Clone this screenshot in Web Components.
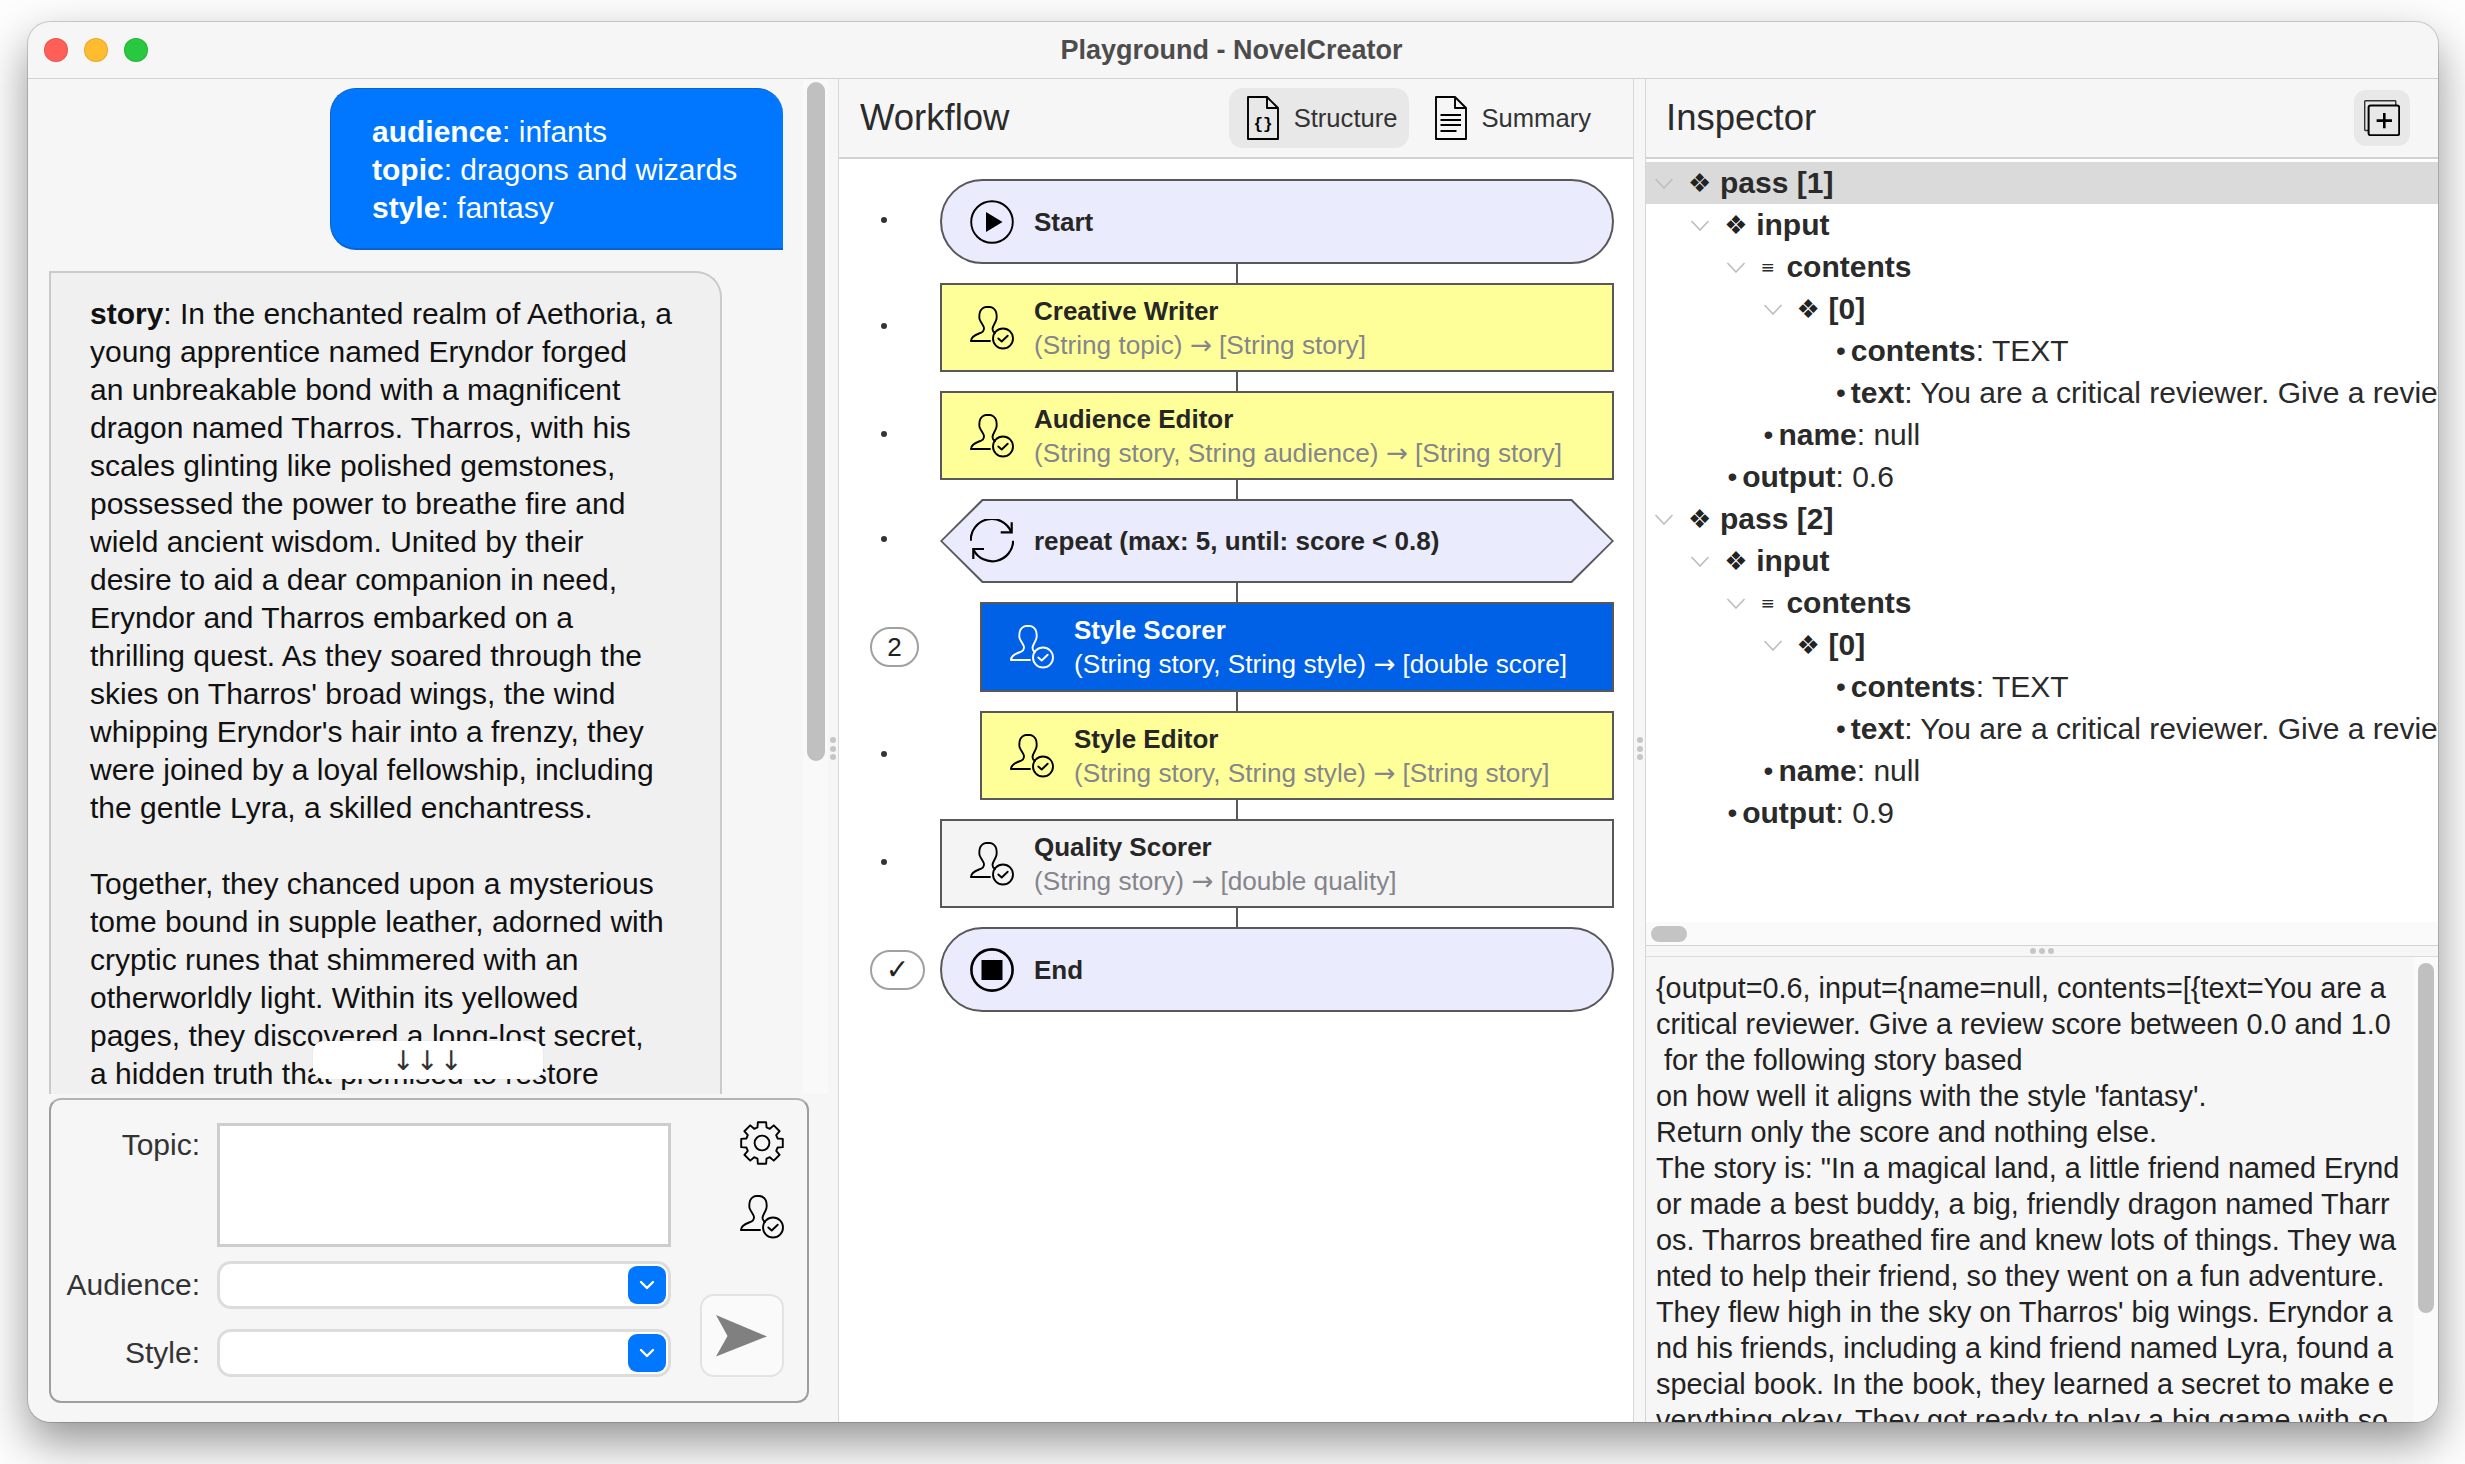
<!DOCTYPE html>
<html>
<head>
<meta charset="utf-8">
<title>Playground - NovelCreator</title>
<style>
    html, body { margin: 0; height: 100%; background: #fdfdfd; }
</style>
</head>
<body>
<novel-app>
    <chat-panel slot="left">
        <chat-bubble kind="user"><b>audience</b>: infants<br><b>topic</b>: dragons and wizards<br><b>style</b>: fantasy</chat-bubble>
        <chat-bubble kind="reply"><b>story</b>: In the enchanted realm of Aethoria, a<br>young apprentice named Eryndor forged<br>an unbreakable bond with a magnificent<br>dragon named Tharros. Tharros, with his<br>scales glinting like polished gemstones,<br>possessed the power to breathe fire and<br>wield ancient wisdom. United by their<br>desire to aid a dear companion in need,<br>Eryndor and Tharros embarked on a<br>thrilling quest. As they soared through the<br>skies on Tharros' broad wings, the wind<br>whipping Eryndor's hair into a frenzy, they<br>were joined by a loyal fellowship, including<br>the gentle Lyra, a skilled enchantress.<br><br>Together, they chanced upon a mysterious<br>tome bound in supple leather, adorned with<br>cryptic runes that shimmered with an<br>otherworldly light. Within its yellowed<br>pages, they discovered a long-lost secret,<br>a hidden truth that promised to restore<br>balance to the realm.</chat-bubble>
    </chat-panel>
    <input-form slot="left"></input-form>

    <flow-panel slot="center">
        <flow-node kind="start" icon="play" name="Start"></flow-node>
        <flow-node kind="agent" icon="agent" name="Creative Writer" sub="(String topic) → [String story]"></flow-node>
        <flow-node kind="agent" icon="agent" name="Audience Editor" sub="(String story, String audience) → [String story]"></flow-node>
        <flow-node kind="loop" icon="repeat" name="repeat (max: 5, until: score &lt; 0.8)"></flow-node>
        <flow-node kind="active" icon="agent" indent name="Style Scorer" sub="(String story, String style) → [double score]" badge="2"></flow-node>
        <flow-node kind="agent" icon="agent" indent name="Style Editor" sub="(String story, String style) → [String story]"></flow-node>
        <flow-node kind="plain" icon="agent" name="Quality Scorer" sub="(String story) → [double quality]"></flow-node>
        <flow-node kind="end" icon="stop" name="End" badge="✓"></flow-node>
    </flow-panel>

    <inspector-panel slot="right">
        <tree-row level="0" mark="❖" open selected><b>pass [1]</b></tree-row>
        <tree-row level="1" mark="❖" open><b>input</b></tree-row>
        <tree-row level="2" mark="≡" open><b>contents</b></tree-row>
        <tree-row level="3" mark="❖" open><b>[0]</b></tree-row>
        <tree-row level="4" mark="•"><b>contents</b>: TEXT</tree-row>
        <tree-row level="4" mark="•"><b>text</b>: You are a critical reviewer. Give a review score between 0.0 and 1.0 for the following story</tree-row>
        <tree-row level="2" mark="•"><b>name</b>: null</tree-row>
        <tree-row level="1" mark="•"><b>output</b>: 0.6</tree-row>
        <tree-row level="0" mark="❖" open><b>pass [2]</b></tree-row>
        <tree-row level="1" mark="❖" open><b>input</b></tree-row>
        <tree-row level="2" mark="≡" open><b>contents</b></tree-row>
        <tree-row level="3" mark="❖" open><b>[0]</b></tree-row>
        <tree-row level="4" mark="•"><b>contents</b>: TEXT</tree-row>
        <tree-row level="4" mark="•"><b>text</b>: You are a critical reviewer. Give a review score between 0.0 and 1.0 for the following story</tree-row>
        <tree-row level="2" mark="•"><b>name</b>: null</tree-row>
        <tree-row level="1" mark="•"><b>output</b>: 0.9</tree-row>
    </inspector-panel>
</novel-app>

<script>
const PERSON = `
    <path d="M.8 35H20M1 35C1 31 5 29 9 27.5 13 26 14 25 14 22 14 20 11 17 9.5 13 9 9 9 1 18 .8 27 1 27 9 26.5 13 25.5 17 22.5 20 22.5 23 22.5 25 23.5 26 25 26.8"/>
    <circle cx="33" cy="32.5" r="10"/>
    <path d="M28.3 32.5l3.4 3 6-5.8"/>`;

const ICONS = {
    agent: PERSON,
    play: `<circle cx="22" cy="22" r="20.8"/><path d="M16 12L32.5 22 16 32Z" fill="currentColor" stroke="none"/>`,
    stop: `<circle cx="22" cy="22" r="20.6" stroke-width="2.6"/><rect x="11.5" y="12" width="21" height="20" fill="currentColor" stroke="none"/>`,
    repeat: `<g stroke-width="2.2" stroke-linecap="butt" stroke-linejoin="miter"><path d="M.8 21.7A21 21 0 0 1 41 12.5M43.2 21.7A21 21 0 0 1 3.6 31"/><path d="M41.7 3.3V13.3H30.7M3.3 40V30H14"/></g>`
};

function svgIcon(name, size = 44) {
    return `<svg width="${size}" height="${size}" viewBox="0 0 44 44" fill="none" stroke="currentColor" stroke-width="1.9" stroke-linecap="round" stroke-linejoin="round">${ICONS[name]}</svg>`;
}

function gearPath() {
    const points = [];
    const teeth = 8;
    for(let i = 0; i < teeth; i++) {
        const a = (i / teeth) * Math.PI * 2 - Math.PI / 2;
        const step = Math.PI * 2 / teeth;
        const corners = [[-.36, 16.2], [-.25, 21.2], [.25, 21.2], [.36, 16.2]];
        for(const [off, r] of corners) {
            const t = a + off * step;
            points.push(`${(22 + Math.cos(t) * r).toFixed(2)} ${(22 + Math.sin(t) * r).toFixed(2)}`);
        }
    }
    return 'M' + points.join('L') + 'Z';
}

class NovelApp extends HTMLElement {
    constructor() {
        super();
        this.attachShadow({ mode: 'open' });
        this.shadowRoot.innerHTML = `
            <style>
                :host {
                    display: block;
                    box-sizing: border-box;
                    height: 100vh;
                    padding: 22px 27px 42px 28px;
                    overflow: hidden;
                    font-family: "Liberation Sans", Arial, sans-serif;
                    color: #262626;
                }

                .window {
                    display: flex;
                    flex-direction: column;
                    height: 100%;
                    border-radius: 22px;
                    overflow: hidden;
                    background: #f6f6f6;
                    box-shadow: 0 0 0 1px rgba(0, 0, 0, .16), 0 20px 46px rgba(0, 0, 0, .42);
                }

                .titlebar {
                    flex: none;
                    display: flex;
                    align-items: center;
                    justify-content: center;
                    position: relative;
                    height: 56px;
                    padding-right: 3px;
                    border-bottom: 1px solid #d2d2d2;
                    font-size: 27px;
                    font-weight: bold;
                    color: #4c4c4c;
                }

                .lights {
                    position: absolute;
                    left: 16px;
                    top: 16px;
                    display: flex;
                    gap: 16px;
                }

                .lights i {
                    width: 24px;
                    height: 24px;
                    border-radius: 50%;
                    box-shadow: inset 0 0 0 1px rgba(0, 0, 0, .1);
                }

                .main {
                    flex: 1;
                    display: flex;
                    min-height: 0;
                }

                .left {
                    flex: none;
                    width: 800px;
                    display: flex;
                    flex-direction: column;
                }

                .center {
                    flex: none;
                    width: 796px;
                    display: flex;
                    min-height: 0;
                }

                .right {
                    flex: 1;
                    min-width: 0;
                    display: flex;
                }

                .sash {
                    flex: none;
                    width: 11px;
                    display: flex;
                    flex-direction: column;
                    align-items: center;
                    justify-content: center;
                    gap: 2.5px;
                    padding-bottom: 4px;
                }

                .sash.first { width: 10px; }

                .sash i {
                    width: 6px;
                    height: 6px;
                    border-radius: 50%;
                    background: #c6c6c6;
                }
            </style>
            <div class="window">
                <div class="titlebar">
                    <div class="lights">
                        <i style="background:#ff5f57"></i>
                        <i style="background:#febc2e"></i>
                        <i style="background:#28c840"></i>
                    </div>
                    Playground - NovelCreator
                </div>
                <div class="main">
                    <div class="left"><slot name="left"></slot></div>
                    <div class="sash first"><i></i><i></i><i></i></div>
                    <div class="center"><slot name="center"></slot></div>
                    <div class="sash"><i></i><i></i><i></i></div>
                    <div class="right"><slot name="right"></slot></div>
                </div>
            </div>
        `;
    }
}

customElements.define('novel-app', NovelApp);


class ChatBubble extends HTMLElement {
    constructor() {
        super();
        this.attachShadow({ mode: 'open' });
        this.shadowRoot.innerHTML = `
            <style>
                :host {
                    display: block;
                    box-sizing: border-box;
                    font-size: 30px;
                    line-height: 38px;
                    white-space: nowrap;
                }

                :host([kind="user"]) {
                    align-self: flex-end;
                    margin: 9px 20px 0 0;
                    width: 453px;
                    padding: 24px 0 21px 41px;
                    color: #fff;
                    background: #0177ff;
                    border: 1px solid #0a62d0;
                    border-bottom-width: 2px;
                    border-right: 0;
                    border-radius: 26px 26px 0 26px;
                }

                :host([kind="reply"]) {
                    align-self: flex-start;
                    margin: 21px 0 0 21px;
                    width: 673px;
                    padding: 22px 0 0 39px;
                    color: #111;
                    background: #f0f0f0;
                    border: 2px solid #cacaca;
                    border-bottom: 0;
                    border-radius: 0 26px 0 0;
                }
            </style>
            <slot></slot>
        `;
    }
}

customElements.define('chat-bubble', ChatBubble);


class ChatPanel extends HTMLElement {
    constructor() {
        super();
        this.attachShadow({ mode: 'open' });
        this.shadowRoot.innerHTML = `
            <style>
                :host {
                    display: flex;
                    flex: none;
                    height: 1015px;
                    position: relative;
                }

                .scroller {
                    flex: 1;
                    min-width: 0;
                    display: flex;
                    flex-direction: column;
                    overflow: hidden;
                }

                .track {
                    flex: none;
                    width: 25px;
                    box-sizing: border-box;
                    padding: 3px 3px 0 4px;
                    background: #f9f9f9;
                }

                .thumb {
                    height: 679px;
                    border-radius: 9px;
                    background: #c0c0c0;
                }

                .more {
                    position: absolute;
                    left: 285px;
                    top: 962px;
                    width: 230px;
                    height: 38px;
                    display: flex;
                    align-items: center;
                    justify-content: center;
                    border-radius: 10px;
                    background: #fff;
                    box-shadow: 0 0 2px rgba(0, 0, 0, .08);
                    font-family: "DejaVu Sans", sans-serif;
                    font-size: 27px;
                    letter-spacing: 1.4px;
                    color: #333;
                }
            </style>
            <div class="scroller"><slot></slot></div>
            <div class="track"><div class="thumb"></div></div>
            <div class="more">↓↓↓</div>
        `;
    }
}

customElements.define('chat-panel', ChatPanel);


class ComboBox extends HTMLElement {
    constructor() {
        super();
        this.attachShadow({ mode: 'open' });
        this.shadowRoot.innerHTML = `
            <style>
                :host {
                    display: flex;
                    align-items: center;
                    justify-content: flex-end;
                    box-sizing: border-box;
                    height: 48px;
                    align-self: start;
                    padding-right: 2px;
                    background: #fff;
                    border: 3px solid #dcdcdc;
                    border-radius: 14px;
                }

                .arrow {
                    width: 38px;
                    height: 38px;
                    display: flex;
                    align-items: center;
                    justify-content: center;
                    border-radius: 9px;
                    background: #0177ff;
                }
            </style>
            <div class="arrow">
                <svg width="16" height="10" viewBox="0 0 16 10" fill="none" stroke="#fff" stroke-width="2.4" stroke-linecap="round" stroke-linejoin="round"><path d="M2 2l6 6 6-6"/></svg>
            </div>
        `;
    }
}

customElements.define('combo-box', ComboBox);


class InputForm extends HTMLElement {
    constructor() {
        super();
        this.attachShadow({ mode: 'open' });
        this.shadowRoot.innerHTML = `
            <style>
                :host {
                    display: block;
                    flex: none;
                    box-sizing: border-box;
                    width: 760px;
                    height: 305px;
                    margin: 4px 0 0 21px;
                    border: 2px solid #9e9e9e;
                    border-top-color: #b4b4b4;
                    border-radius: 12px;
                    background: #f6f6f6;
                    font-size: 30px;
                    color: #333;
                }

                .grid {
                    display: grid;
                    grid-template-columns: 149px 454px 1fr;
                    grid-template-rows: 124px 54px 48px;
                    column-gap: 17px;
                    row-gap: 14px;
                    padding: 23px 0 0 0;
                }

                .label {
                    text-align: right;
                    line-height: 48px;
                }

                .label.top { line-height: 44px; }

                .topic {
                    background: #fff;
                    border: 3px solid #cdcdcd;
                    box-sizing: border-box;
                }

                .tools {
                    grid-column: 3;
                    grid-row: 1;
                    display: flex;
                    flex-direction: column;
                    align-items: flex-end;
                    gap: 30px;
                    padding: 0 23px 0 0;
                    margin-top: -2px;
                }

                .send {
                    grid-column: 3;
                    grid-row: 2 / 4;
                    align-self: end;
                    justify-self: end;
                    margin-right: 23px;
                    width: 84px;
                    height: 83px;
                    box-sizing: border-box;
                    display: flex;
                    align-items: center;
                    justify-content: center;
                    border: 2px solid #e3e3e3;
                    border-radius: 14px;
                    background: #fafafa;
                }

                svg { display: block; color: #000; }
            </style>
            <div class="grid">
                <div class="label top">Topic:</div>
                <div class="topic"></div>
                <div class="tools">
                    <svg width="44" height="44" viewBox="0 0 44 44" fill="none" stroke="currentColor" stroke-width="1.9" stroke-linejoin="round">
                        <path d="${gearPath()}"/><circle cx="22" cy="22" r="7.4"/>
                    </svg>
                    ${svgIcon('agent')}
                </div>
                <div class="label">Audience:</div>
                <combo-box></combo-box>
                <div class="send">
                    <svg width="52" height="42" viewBox="0 0 52 42"><path d="M0 0L51 21.4 0 41.5 11.5 21Z" fill="#808080"/></svg>
                </div>
                <div class="label">Style:</div>
                <combo-box></combo-box>
            </div>
        `;
    }
}

customElements.define('input-form', InputForm);


class FlowNode extends HTMLElement {
    constructor() {
        super();
        this.attachShadow({ mode: 'open' });
        const name = this.getAttribute('name');
        const sub = this.getAttribute('sub');
        const badge = this.getAttribute('badge');
        this.shadowRoot.innerHTML = `
            <style>
                :host {
                    display: flex;
                    align-items: center;
                    height: 89px;
                    flex: none;
                    position: relative;
                }

                :host([kind="start"]), :host([kind="end"]) { height: 85px; }
                :host([kind="loop"]) { height: 84px; }
                :host([kind="active"]) { height: 90px; }

                .status {
                    flex: none;
                    width: 101px;
                    padding-left: 31px;
                    box-sizing: border-box;
                }

                .dot {
                    display: block;
                    width: 6px;
                    height: 6px;
                    margin-left: 11px;
                    margin-top: -4px;
                    border-radius: 50%;
                    background: #333;
                }

                .badge {
                    display: flex;
                    align-items: center;
                    justify-content: center;
                    width: 49px;
                    height: 40px;
                    box-sizing: border-box;
                    border: 2px solid #a0a0a0;
                    border-radius: 20px;
                    font-size: 26px;
                    color: #222;
                }

                .badge.wide {
                    width: 55px;
                    font-family: "DejaVu Sans", sans-serif;
                    font-size: 28px;
                    line-height: 1;
                }

                .box {
                    flex: 1;
                    align-self: stretch;
                    display: flex;
                    align-items: center;
                    gap: 20px;
                    box-sizing: border-box;
                    padding: 0 0 0 28px;
                    border: 2px solid #585858;
                    position: relative;
                }

                :host([indent]) .box { margin-left: 40px; }
                :host([kind="agent"]) .box { background: #ffff99; }
                :host([kind="plain"]) .box { background: #f4f4f4; }
                :host([kind="active"]) .box { background: #0060e6; color: #fff; }
                :host([kind="start"]) .box, :host([kind="end"]) .box { background: #eaebfc; border-radius: 43px; }

                :host([kind="loop"]) .box {
                    border: 0;
                    padding-left: 30px;
                    background: #585858;
                    clip-path: polygon(42px 0, calc(100% - 42px) 0, 100% 50%, calc(100% - 42px) 100%, 42px 100%, 0 50%);
                }

                :host([kind="loop"]) .box::before {
                    content: "";
                    position: absolute;
                    inset: 0;
                    background: #eaebfc;
                    clip-path: polygon(43px 2px, calc(100% - 43px) 2px, calc(100% - 2.4px) 50%, calc(100% - 43px) calc(100% - 2px), 43px calc(100% - 2px), 2.4px 50%);
                }

                .icon, .text { position: relative; }
                .icon { flex: none; height: 44px; color: #000; margin-left: 0; }
                :host([kind="active"]) .icon { color: #fff; }
                svg { display: block; }

                .name {
                    font-size: 26px;
                    font-weight: bold;
                    line-height: 34px;
                    white-space: nowrap;
                }

                .sub {
                    font-size: 26.2px;
                    line-height: 34px;
                    color: #85858c;
                    white-space: nowrap;
                }

                .sub span { font-family: "DejaVu Sans", sans-serif; }

                :host([kind="active"]) .sub { color: #fff; }
            </style>
            <div class="status">
                ${badge
                    ? `<span class="badge ${badge === '2' ? '' : 'wide'}">${badge}</span>`
                    : `<span class="dot"></span>`}
            </div>
            <div class="box">
                <div class="icon">${svgIcon(this.getAttribute('icon'))}</div>
                <div class="text">
                    <div class="name"></div>
                    ${sub ? `<div class="sub">${sub.replace('→', '<span>→</span>')}</div>` : ''}
                </div>
            </div>
        `;
        this.shadowRoot.querySelector('.name').textContent = name;
    }
}

customElements.define('flow-node', FlowNode);


class FlowPanel extends HTMLElement {
    constructor() {
        super();
        this.attachShadow({ mode: 'open' });
        this.shadowRoot.innerHTML = `
            <style>
                :host {
                    display: flex;
                    flex-direction: column;
                    flex: 1;
                    min-width: 0;
                    border-left: 1px solid #d6d6d6;
                    border-right: 1px solid #d6d6d6;
                }

                .head {
                    flex: none;
                    display: flex;
                    align-items: center;
                    height: 78px;
                    padding: 0 0 0 21px;
                    border-bottom: 2px solid #d2d2d2;
                }

                h1 {
                    flex: 1;
                    margin: 0;
                    font-size: 36.5px;
                    font-weight: normal;
                    color: #2b2b2b;
                }

                .tab {
                    display: flex;
                    align-items: center;
                    gap: 15px;
                    height: 60px;
                    padding: 0 11px 0 18px;
                    border-radius: 14px;
                    font-size: 25.6px;
                    color: #333;
                }

                .tab.on { background: #e8e8e8; }

                .tab + .tab { margin: 0 31px 0 8px; }

                .tab svg { display: block; color: #000; }

                .flow {
                    flex: 1;
                    background: #fff;
                    padding: 20px 19px 0 0;
                    display: flex;
                    flex-direction: column;
                    gap: 19px;
                    position: relative;
                }

                .wire {
                    position: absolute;
                    left: 397px;
                    top: 30px;
                    height: 760px;
                    width: 2px;
                    background: #585858;
                }

                ::slotted(flow-node) { z-index: 1; }
            </style>
            <div class="head">
                <h1>Workflow</h1>
                <div class="tab on">
                    <svg width="32" height="44" viewBox="0 0 32 44" fill="none" stroke="currentColor" stroke-width="1.9" stroke-linejoin="round">
                        <path d="M1 1H20L31 12V43H1ZM20 1V12H31"/>
                        <text x="16" y="33" text-anchor="middle" font-family="Liberation Mono, monospace" font-size="16" font-weight="bold" fill="currentColor" stroke="none">{}</text>
                    </svg>
                    Structure
                </div>
                <div class="tab">
                    <svg width="32" height="44" viewBox="0 0 32 44" fill="none" stroke="currentColor" stroke-width="1.9" stroke-linejoin="round">
                        <path d="M1 1H20L31 12V43H1ZM20 1V12H31"/>
                        <path d="M5.5 19H26M5.5 24H26M5.5 29H26M5.5 35H21.5"/>
                    </svg>
                    Summary
                </div>
            </div>
            <div class="flow">
                <div class="wire"></div>
                <slot></slot>
            </div>
        `;
    }
}

customElements.define('flow-panel', FlowPanel);


class TreeRow extends HTMLElement {
    constructor() {
        super();
        this.attachShadow({ mode: 'open' });
        const level = parseInt(this.getAttribute('level'));
        const mark = this.getAttribute('mark');
        const open = this.hasAttribute('open');
        this.shadowRoot.innerHTML = `
            <style>
                :host {
                    display: flex;
                    align-items: center;
                    height: 42px;
                    flex: none;
                    font-size: 30px;
                    white-space: nowrap;
                    color: #2a2a2a;
                }

                :host([selected]) { background: #dadada; }

                .chev {
                    flex: none;
                    width: 36px;
                    display: flex;
                    justify-content: center;
                }

                .mark {
                    flex: none;
                    width: 38px;
                    box-sizing: border-box;
                    padding-left: 6px;
                    font-family: "DejaVu Sans", sans-serif;
                    font-size: 26px;
                    color: #222;
                }

                .lines {
                    flex: none;
                    width: 32px;
                    box-sizing: border-box;
                    padding-left: 6px;
                    font-family: "DejaVu Sans", sans-serif;
                    font-size: 17px;
                }

                .leaf {
                    flex: none;
                    width: 60px;
                    box-sizing: border-box;
                    padding-right: 5px;
                    text-align: right;
                    font-size: 28px;
                }
            </style>
            <span style="flex:none;width:${level * 36.2}px"></span>
            ${open
                ? `<span class="chev"><svg width="20" height="11" viewBox="0 0 20 11" fill="none" stroke="#bdbdbd" stroke-width="1.6"><path d="M1.5 1l8.5 9 8.5-9"/></svg></span>`
                : ''}
            <span class="${mark === '•' ? 'leaf' : mark === '≡' ? 'lines' : 'mark'}">${mark}</span>
            <span><slot></slot></span>
        `;
    }
}

customElements.define('tree-row', TreeRow);


class InspectorPanel extends HTMLElement {
    constructor() {
        super();
        this.attachShadow({ mode: 'open' });
        this.shadowRoot.innerHTML = `
            <style>
                :host {
                    display: flex;
                    flex-direction: column;
                    flex: 1;
                    min-width: 0;
                    border-left: 1px solid #d6d6d6;
                }

                .head {
                    flex: none;
                    display: flex;
                    align-items: center;
                    justify-content: space-between;
                    height: 78px;
                    padding: 0 28px 0 20px;
                    border-bottom: 2px solid #d2d2d2;
                }

                h1 {
                    margin: 0;
                    font-size: 36.5px;
                    font-weight: normal;
                    color: #2b2b2b;
                }

                .copy {
                    width: 56px;
                    height: 56px;
                    display: flex;
                    align-items: center;
                    justify-content: center;
                    border-radius: 12px;
                    background: #e8e8e8;
                }

                .tree {
                    flex: none;
                    height: 763px;
                    box-sizing: border-box;
                    padding-top: 3px;
                    background: #fff;
                    display: flex;
                    flex-direction: column;
                    overflow: hidden;
                }

                .hbar {
                    flex: none;
                    height: 24px;
                    padding: 4px 0 0 5px;
                    box-sizing: border-box;
                    background: #fafafa;
                    border-bottom: 1px solid #d2d2d2;
                }

                .hbar i {
                    display: block;
                    width: 36px;
                    height: 16px;
                    border-radius: 8px;
                    background: #c4c4c4;
                }

                .sash {
                    flex: none;
                    height: 11px;
                    display: flex;
                    align-items: center;
                    justify-content: center;
                    gap: 3px;
                    border-bottom: 1px solid #dadada;
                    box-sizing: border-box;
                }

                .sash i {
                    width: 6px;
                    height: 6px;
                    border-radius: 50%;
                    background: #c6c6c6;
                }

                .detail {
                    flex: 1;
                    min-height: 0;
                    display: flex;
                    overflow: hidden;
                }

                .text {
                    flex: 1;
                    margin: 0;
                    padding: 13px 0 0 10px;
                    font: 28.8px/36px "Liberation Sans", Arial, sans-serif;
                    color: #222;
                    white-space: pre;
                    overflow: hidden;
                }

                .vbar {
                    flex: none;
                    width: 25px;
                    box-sizing: border-box;
                    padding: 6px 4px 0 5px;
                    background: #fafafa;
                }

                .vbar i {
                    display: block;
                    height: 350px;
                    border-radius: 8px;
                    background: #c0c0c0;
                }
            </style>
            <div class="head">
                <h1>Inspector</h1>
                <div class="copy">
                    <svg width="36" height="36" viewBox="0 0 36 36" fill="none" stroke="#000" stroke-width="2" stroke-linejoin="round">
                        <path d="M4.3 30.5H1.4A.8.8 0 0 1 .7 29.7V1.4A.8.8 0 0 1 1.4 .7H31A.8.8 0 0 1 31.8 1.4V5.3" stroke="#333" stroke-width="1.4"/>
                        <rect x="4.6" y="5.6" width="30.6" height="29.6" rx="2"/>
                        <path d="M12.6 20.6H28M20.3 13V28.2" stroke-width="2.6"/>
                    </svg>
                </div>
            </div>
            <div class="tree"><slot></slot></div>
            <div class="hbar"><i></i></div>
            <div class="sash"><i></i><i></i><i></i></div>
            <div class="detail">
                <pre class="text">{output=0.6, input={name=null, contents=[{text=You are a
critical reviewer. Give a review score between 0.0 and 1.0
 for the following story based
on how well it aligns with the style 'fantasy'.
Return only the score and nothing else.
The story is: "In a magical land, a little friend named Erynd
or made a best buddy, a big, friendly dragon named Tharr
os. Tharros breathed fire and knew lots of things. They wa
nted to help their friend, so they went on a fun adventure.
They flew high in the sky on Tharros' big wings. Eryndor a
nd his friends, including a kind friend named Lyra, found a
special book. In the book, they learned a secret to make e
verything okay. They got ready to play a big game with so</pre>
                <div class="vbar"><i></i></div>
            </div>
        `;
    }
}

customElements.define('inspector-panel', InspectorPanel);
</script>
</body>
</html>
